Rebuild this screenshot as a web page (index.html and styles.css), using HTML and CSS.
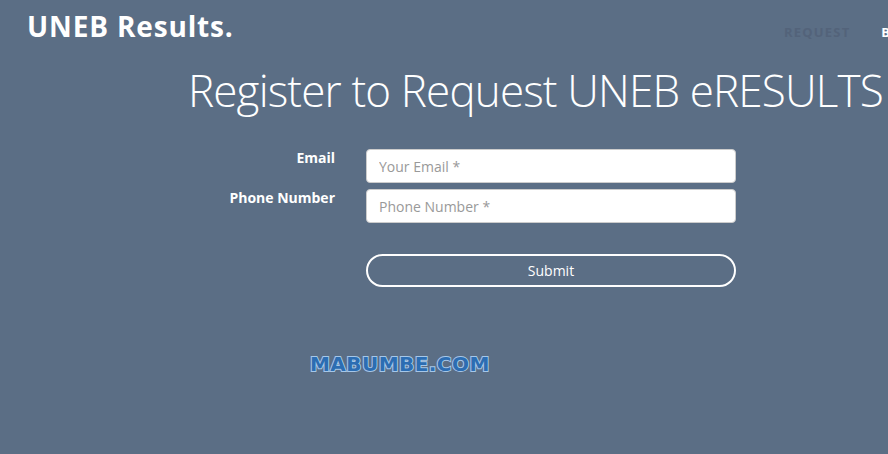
FILE: index.html
```html
<!DOCTYPE html>
<html lang="en">
<head>
  <meta charset="UTF-8">
  <meta name="viewport" content="width=device-width, initial-scale=1.0">
  <title>UNEB Results</title>
  <link rel="stylesheet" href="styles.css">
</head>
<body>
  <header class="topbar">
    <div class="brand">UNEB Results.</div>
    <nav class="menu">
      <a href="#" class="menu-item muted">REQUEST</a>
      <a href="#" class="menu-item">BLOG</a>
    </nav>
  </header>

  <h1 class="title">Register to Request UNEB eRESULTS</h1>

  <form class="reg-form" onsubmit="return false;">
    <label for="email">Email</label>
    <input type="email" id="email" placeholder="Your Email *">
    <label for="phone">Phone Number</label>
    <input type="tel" id="phone" placeholder="Phone Number *">
    <span></span>
    <button type="submit" class="submit">Submit</button>
  </form>

  <div class="watermark">MABUMBE.COM</div>
</body>
</html>
```

FILE: styles.css
```css
html, body { margin:0; padding:0; }
body { background:#5b6e85; font-family:"Open Sans", Arial, sans-serif; color:#fff; height:454px; overflow:hidden; }

.topbar { display:flex; justify-content:space-between; align-items:flex-start; padding:7px 0 0 27px; height:53px; }
.brand { font-size:28px; font-weight:700; letter-spacing:0.85px; line-height:38px; }
.menu { display:flex; gap:31px; padding-top:16px; margin-right:-34px; flex-shrink:0; }
.menu-item { font-size:13px; font-weight:700; letter-spacing:1.2px; color:#fff; text-decoration:none; }
.menu-item.muted { color:#53637a; }

.title { margin:0 0 0 188px; font-size:44px; font-weight:300; line-height:60px; white-space:nowrap; letter-spacing:-0.85px; }

.reg-form { display:grid; grid-template-columns:335px 370px; column-gap:31px; row-gap:6px; margin-top:29px; }
.reg-form label { text-align:right; font-size:14px; font-weight:700; line-height:18px; }
.reg-form input { box-sizing:border-box; height:34px; border:1px solid #ccc; border-radius:4px; padding:0 12px; font-family:inherit; font-size:14px; color:#555; background:#fff; }
.reg-form input::placeholder { color:#999; }
.submit { grid-column:2; margin-top:25px; box-sizing:border-box; height:33px; background:transparent; border:2px solid #fff; border-radius:17px; color:#fff; font-family:inherit; font-size:14px; cursor:pointer; }

.watermark { margin:65px 0 0 310px; font-family:"DejaVu Sans", sans-serif; font-weight:700; font-size:20px; letter-spacing:0.45px; color:#2c6db2; -webkit-text-stroke:2px #a6c7e8; paint-order:stroke fill; }
```
